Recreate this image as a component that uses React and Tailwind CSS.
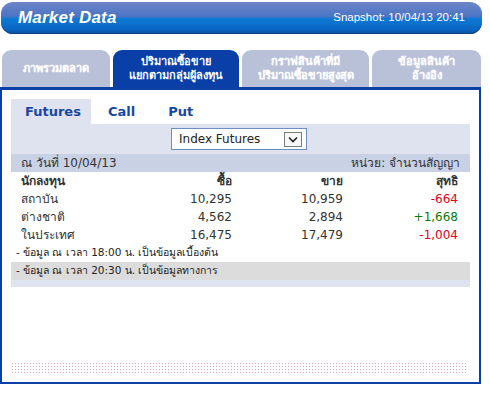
const rows = [
  { name: 'สถาบัน', buy: '10,295', sell: '10,959', net: '-664', up: false },
  { name: 'ต่างชาติ', buy: '4,562', sell: '2,894', net: '+1,668', up: true },
  { name: 'ในประเทศ', buy: '16,475', sell: '17,479', net: '-1,004', up: false },
];

const tabs = [
  { label: ['ภาพรวมตลาด'], w: 'w-[108px]', active: false },
  { label: ['ปริมาณซื้อขาย', 'แยกตามกลุ่มผู้ลงทุน'], w: 'w-[126px]', active: true },
  { label: ['กราฟสินค้าที่มี', 'ปริมาณซื้อขายสูงสุด'], w: 'w-[127px]', active: false },
  { label: ['ข้อมูลสินค้า', 'อ้างอิง'], w: 'w-[109px]', active: false },
];

export default function App() {
  return (
    <div className="w-[490px] h-[395px] bg-white overflow-hidden font-['DejaVu_Sans',Tahoma,sans-serif] text-[#333]">
      {/* header bar */}
      <div className="mt-[2px] ml-[1px] w-[481px] h-[32px] rounded-[12px] flex items-center justify-between px-[17px] bg-[linear-gradient(180deg,#6f86c8_0%,#4a74c4_46%,#0c7ad6_52%,#0a66c2_85%,#0a4f9e_100%)] shadow-[inset_0_-1px_0_#0b3f86]">
        <span className="font-['Liberation_Sans',Arial,sans-serif] font-bold italic text-[17px] text-white tracking-[0.2px]">
          Market Data
        </span>
        <span className="font-['Liberation_Sans',Arial,sans-serif] text-[11.5px] text-white">
          Snapshot: 10/04/13 20:41
        </span>
      </div>

      {/* tabs */}
      <div className="mt-[16px] ml-[2px] flex gap-[3px] h-[37px] items-end">
        {tabs.map((t, i) => (
          <div
            key={i}
            className={`${t.w} h-[37px] rounded-t-[9px] flex flex-col items-center justify-center leading-[14px] text-[11px] font-bold text-white ${
              t.active ? 'bg-[#0a3fa8]' : 'bg-[#b9c1d9] [text-shadow:0_0_1px_#e8ecf6] text-[#f4f6fb]'
            }`}
          >
            {t.label.map((l) => (
              <span key={l}>{l}</span>
            ))}
          </div>
        ))}
      </div>

      {/* panel */}
      <div className="w-[481px] h-[297px] border-2 border-t-[3px] border-[#0a3fa8] px-[9px] pt-[8px]">
        {/* sub tabs */}
        <div className="flex items-end h-[26px] text-[13px] font-bold text-[#1747a6]">
          <div className="w-[80px] h-[25px] bg-[#dfe3ef] flex items-center pl-[14px]">Futures</div>
          <div className="ml-[17px] h-[25px] flex items-center">Call</div>
          <div className="ml-[33px] h-[25px] flex items-center">Put</div>
        </div>

        {/* selector bar */}
        <div className="h-[30px] bg-[#dfe3ef] flex items-center pl-[160px]">
          <div className="w-[136px] h-[22px] bg-white border border-[#6f8fc0] flex items-center justify-between pl-[7px] pr-[4px] text-[12px] text-[#222]">
            <span>Index Futures</span>
            <span className="w-[18px] h-[15px] border border-[#7a7a7a] bg-[#f7f7f7] flex items-center justify-center">
              <svg width="10" height="7" viewBox="0 0 10 7">
                <path d="M1 1.5 L5 5.5 L9 1.5" stroke="#222" strokeWidth="1.6" fill="none" />
              </svg>
            </span>
          </div>
        </div>

        {/* date row */}
        <div className="h-[18px] bg-[#c9d1e5] flex items-center justify-between px-[10px] text-[12px]">
          <span>ณ วันที่ 10/04/13</span>
          <span>หน่วย: จำนวนสัญญา</span>
        </div>

        {/* table */}
        <div className="px-[10px] text-[12px]">
          <div className="grid grid-cols-[111px_100px_111px_115px] h-[18px] items-center font-bold">
            <span>นักลงทุน</span>
            <span className="text-right">ซื้อ</span>
            <span className="text-right">ขาย</span>
            <span className="text-right">สุทธิ</span>
          </div>
          {rows.map((r) => (
            <div key={r.name} className="grid grid-cols-[111px_100px_111px_115px] h-[18px] items-center">
              <span>{r.name}</span>
              <span className="text-right">{r.buy}</span>
              <span className="text-right">{r.sell}</span>
              <span className={`text-right ${r.up ? 'text-[#0a7a0a]' : 'text-[#e3001b]'}`}>{r.net}</span>
            </div>
          ))}
        </div>

        <div className="h-[18px] flex items-center px-[5px] text-[10.5px] text-[#222]">
          - ข้อมูล ณ เวลา 18:00 น. เป็นข้อมูลเบื้องต้น
        </div>
        <div className="h-[18px] flex items-center px-[5px] text-[10.5px] text-[#222] bg-[#dcdcdc]">
          - ข้อมูล ณ เวลา 20:30 น. เป็นข้อมูลทางการ
        </div>
        <div className="h-[7px] bg-[#dfe3ef]" />

        {/* dotted strip */}
        <div className="mt-[75px] mr-[2px] h-[11px] bg-[radial-gradient(circle,#d8a4c4_0.7px,transparent_0.9px)] bg-[length:3px_3px]" />
      </div>
    </div>
  );
}
